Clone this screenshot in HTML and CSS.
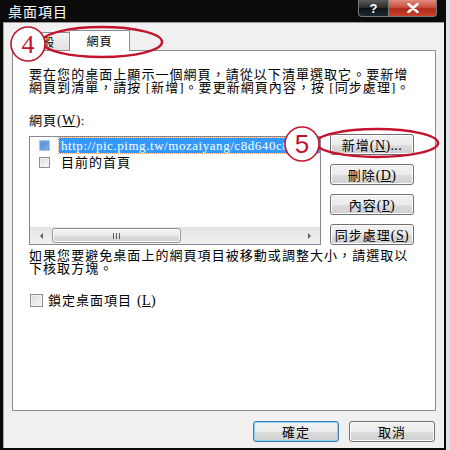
FILE: index.html
```html
<!DOCTYPE html>
<html lang="zh-Hant">
<head>
  <meta charset="UTF-8">
  <title>桌面項目</title>
  <link rel="stylesheet" href="styles.css">
</head>
<body>
  <div class="window">
    <div class="titlebar">
      <span class="title">桌面項目</span>
      <div class="caption-btns">
        <span class="cbtn help">?</span>
        <span class="cbtn close">
          <svg width="12" height="10" viewBox="0 0 12 10"><path d="M1.5 1 L10.5 9 M10.5 1 L1.5 9" stroke="#fff" stroke-width="2.6" stroke-linecap="round"/></svg>
        </span>
      </div>
    </div>

    <div class="client">
      <div class="tabs">
        <div class="tab">一般</div>
        <div class="tab active">網頁</div>
      </div>

      <div class="panel">
        <p class="desc">要在您的桌面上顯示一個網頁，請從以下清單選取它。要新增<br>網頁到清單，請按 [新增]。要更新網頁內容，按 [同步處理]。</p>

        <div class="field-label">網頁<span class="mn">(<u>W</u>)</span>:</div>

        <div class="list-row">
          <div class="listbox">
            <div class="items">
              <div class="item selected">
                <span class="chk chk-sel"></span>
                <span class="item-text url">http://pic.pimg.tw/mozaiyang/c8d640c898d4</span>
              </div>
              <div class="item">
                <span class="chk"></span>
                <span class="item-text">目前的首頁</span>
              </div>
            </div>
            <div class="hscroll">
              <span class="arrow"><i class="tri tri-left"></i></span>
              <div class="track">
                <div class="thumb"><i class="grip"></i></div>
              </div>
              <span class="arrow"><i class="tri tri-right"></i></span>
            </div>
          </div>

          <div class="side-btns">
            <button class="btn">新增<span class="mn">(<u>N</u>)...</span></button>
            <button class="btn">刪除<span class="mn">(<u>D</u>)</span></button>
            <button class="btn">內容<span class="mn">(<u>P</u>)</span></button>
            <button class="btn">同步處理<span class="mn">(<u>S</u>)</span></button>
          </div>
        </div>

        <p class="desc note">如果您要避免桌面上的網頁項目被移動或調整大小，請選取以<br>下核取方塊。</p>

        <label class="lock"><span class="chk chk-big"></span>鎖定桌面項目<span class="mn">(<u>L</u>)</span></label>
      </div>

      <div class="footer">
        <button class="btn wide default">確定</button>
        <button class="btn wide">取消</button>
      </div>
    </div>

    <!-- red annotation marks -->
    <svg class="marks" width="450" height="450" viewBox="0 0 450 450">
      <ellipse cx="102" cy="42" rx="60" ry="15" fill="none" stroke="#c3142d" stroke-width="2.5"/>
      <circle cx="28" cy="44" r="17" fill="#fff" stroke="#c3142d" stroke-width="1.6"/>
      <text x="28" y="53" class="num num-serif">4</text>
      <ellipse cx="377" cy="143" rx="61" ry="14" fill="none" stroke="#c3142d" stroke-width="2.5"/>
      <circle cx="302" cy="144" r="17" fill="#fff" stroke="#c3142d" stroke-width="1.6"/>
      <text x="302" y="153" class="num">5</text>
    </svg>
  </div>
</body>
</html>
```

FILE: styles.css
```css
* {
  box-sizing: border-box;
}

body {
  margin: 0;
  background: #dde3ea;
  font-family: "Liberation Serif", "Noto Sans CJK TC", serif;
  font-size: 13px;
  color: #000;
}

u {
  text-decoration: underline;
}

.mn {
  letter-spacing: 0.4px;
  font-size: 14px;
}

.window {
  position: relative;
  width: 446px;
  height: 450px;
  background: #0b0b0b;
  padding: 0 2px 2px 3px;
  display: flex;
  flex-direction: column;
}

/* title bar */
.titlebar {
  height: 22px;
  display: flex;
  align-items: flex-start;
  color: #fff;
}

.title {
  font-family: "Noto Sans CJK TC", sans-serif;
  font-size: 14px;
  letter-spacing: 1px;
  line-height: 22px;
  padding-left: 5px;
}

.caption-btns {
  margin-left: auto;
  margin-right: 7px;
  display: flex;
}

.cbtn {
  height: 17px;
  display: flex;
  align-items: center;
  justify-content: center;
  border: 1px solid #7a7a7a;
  border-top: none;
  color: #fff;
  font-family: "Liberation Sans", sans-serif;
  font-weight: bold;
  font-size: 13px;
}

.help {
  width: 31px;
  border-radius: 0 0 0 4px;
  background: linear-gradient(#5a5a5a, #2a2a2a 50%, #101010 51%, #1c2a33);
}

.close {
  width: 48px;
  border-left: none;
  border-radius: 0 0 4px 0;
  background: linear-gradient(#e08a7c, #c9513f 45%, #b02a18 55%, #c8432e);
}

/* client area */
.client {
  flex: 1;
  background: #f0f0f0;
  border-top: 1px solid #9a9a9a;
  box-shadow: inset 1px 0 #a8a8a8;
  padding: 7px 8px 0 9px;
  display: flex;
  flex-direction: column;
}

.tabs {
  display: flex;
  height: 20px;
  align-items: flex-end;
  padding-left: 2px;
}

.tab {
  height: 18px;
  width: 56px;
  border: 1px solid #898c95;
  border-bottom: none;
  background: linear-gradient(#f3f3f3, #e1e1e1);
  text-align: center;
  line-height: 17px;
  letter-spacing: 1px;
  font-family: "Noto Sans CJK TC", sans-serif;
  font-size: 12px;
}

.tab.active {
  height: 21px;
  width: 61px;
  margin-left: -1px;
  margin-bottom: -1px;
  background: #fff;
  position: relative;
  z-index: 1;
  line-height: 20px;
}

.panel {
  height: 361px;
  border: 1px solid #898c95;
  background: #fff;
  padding: 17px 14px 0 16px;
  display: flex;
  flex-direction: column;
  align-items: flex-start;
}

.desc {
  margin: 0;
  line-height: 13px;
  letter-spacing: 1.05px;
  white-space: nowrap;
}

.field-label {
  margin-top: 20px;
  line-height: 13px;
  letter-spacing: 1px;
}

.list-row {
  margin-top: 9px;
  display: flex;
  gap: 9px;
}

.listbox {
  width: 292px;
  height: 109px;
  border: 1px solid #828790;
  display: flex;
  flex-direction: column;
}

.items {
  flex: 1;
  padding-left: 9px;
  overflow: hidden;
}

.item {
  display: flex;
  align-items: center;
  gap: 9px;
  height: 17px;
  white-space: nowrap;
  letter-spacing: 1px;
}

.item-text {
  padding: 0 2px;
  line-height: 15px;
}

.selected .item-text {
  background: #3399ff;
  color: #fff;
  outline: 1px dotted #e0a070;
}

.url {
  letter-spacing: 0.55px;
}

.chk {
  flex: none;
  width: 11px;
  height: 11px;
  border: 1px solid #8e8f8f;
  background: linear-gradient(135deg, #d8d8d8, #fbfbfb);
  box-shadow: inset 0 0 0 1px #f2f2f2;
}

.chk-sel {
  border-color: #a9c8ee;
  background: linear-gradient(135deg, #4a88cf, #7fb2ea);
  box-shadow: inset 0 0 0 1px #6aa0dd;
}

.chk-big {
  width: 13px;
  height: 13px;
}

/* horizontal scrollbar */
.hscroll {
  height: 17px;
  display: flex;
  align-items: center;
  background: linear-gradient(#e3e3e3, #f1f1f1);
}

.arrow {
  width: 22px;
  height: 17px;
  display: flex;
  align-items: center;
  justify-content: center;
}

.tri {
  width: 0;
  height: 0;
  border-top: 3px solid transparent;
  border-bottom: 3px solid transparent;
}

.tri-left {
  border-right: 3px solid #606060;
}

.tri-right {
  border-left: 3px solid #606060;
}

.track {
  flex: 1;
  height: 15px;
}

.thumb {
  width: 129px;
  height: 15px;
  border: 1px solid #979797;
  border-radius: 3px;
  background: linear-gradient(#f7f7f7, #e8e8e8 50%, #dadada 51%, #d2d2d2);
  box-shadow: inset 0 0 0 1px #fbfbfb;
  display: flex;
  align-items: center;
  justify-content: center;
}

.grip {
  width: 7px;
  height: 6px;
  background: repeating-linear-gradient(to right, #5c5c5c 0 1px, transparent 1px 3px);
}

/* buttons */
.side-btns {
  display: flex;
  flex-direction: column;
  gap: 9px;
  margin-top: -2px;
}

.btn {
  width: 84px;
  height: 21px;
  padding: 0;
  border: 1px solid #707070;
  border-radius: 3px;
  background: linear-gradient(#f2f2f2, #ebebeb 50%, #dddddd 51%, #cfcfcf);
  box-shadow: inset 0 0 0 1px #fcfcfc;
  font-family: inherit;
  font-size: 13px;
  letter-spacing: 1px;
  color: #000;
}

.btn.wide {
  width: 86px;
}

.btn.default {
  border-color: #3c7fb1;
  box-shadow: inset 0 0 0 1px #8fd0f5;
}

.note {
  margin-top: 4px;
}

.lock {
  margin-top: 19px;
  margin-left: 1px;
  display: flex;
  align-items: center;
  gap: 5px;
  line-height: 13px;
  letter-spacing: 1px;
}

.footer {
  display: flex;
  justify-content: flex-end;
  gap: 10px;
  padding-top: 10px;
  margin-right: 1px;
}

/* annotations */
.marks {
  position: absolute;
  top: 0;
  left: 0;
  pointer-events: none;
}

.num {
  fill: #c3142d;
  font-family: "Liberation Sans", sans-serif;
  font-size: 26px;
  text-anchor: middle;
}

.num-serif {
  font-family: "Liberation Serif", serif;
}
```
